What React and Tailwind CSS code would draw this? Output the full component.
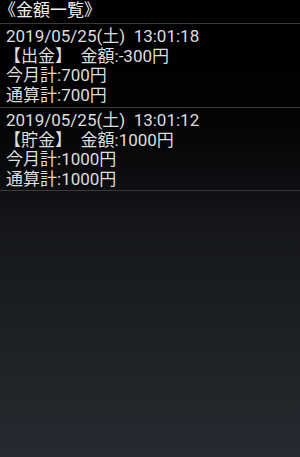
import React from "react";

const entries = [
  {
    date: "2019/05/25(土)  13:01:18",
    kind: "【出金】",
    amount: "-300円",
    month: "700円",
    total: "700円",
  },
  {
    date: "2019/05/25(土)  13:01:12",
    kind: "【貯金】",
    amount: "1000円",
    month: "1000円",
    total: "1000円",
  },
];

const App = () => {
  return (
    <div
      className="w-[300px] h-[457px] overflow-hidden bg-gradient-to-b from-[#000000] via-[#15171a] to-[#272a30] text-[17px] leading-[19.5px] text-[#dedede]"
      style={{ fontFamily: 'Roboto, "Noto Sans CJK JP", sans-serif' }}
    >
      <div className="h-[24px] pt-[1px] -ml-[1px] text-[17px] text-[#f2f2f2] border-b border-[#3a3a3a]">
        《金額一覧》
      </div>
      {entries.map((e, index) => (
        <div
          key={index}
          className={`pl-[6px] pt-[3px] border-b border-[#3a3a3a] ${
            index === 0 ? "h-[84px]" : "h-[83px]"
          }`}
        >
          <div className="whitespace-pre">{e.date}</div>
          <div className="-ml-[2px] whitespace-pre">
            {e.kind}　金額:{e.amount}
          </div>
          <div>今月計:{e.month}</div>
          <div>通算計:{e.total}</div>
        </div>
      ))}
    </div>
  );
};

export default App;
